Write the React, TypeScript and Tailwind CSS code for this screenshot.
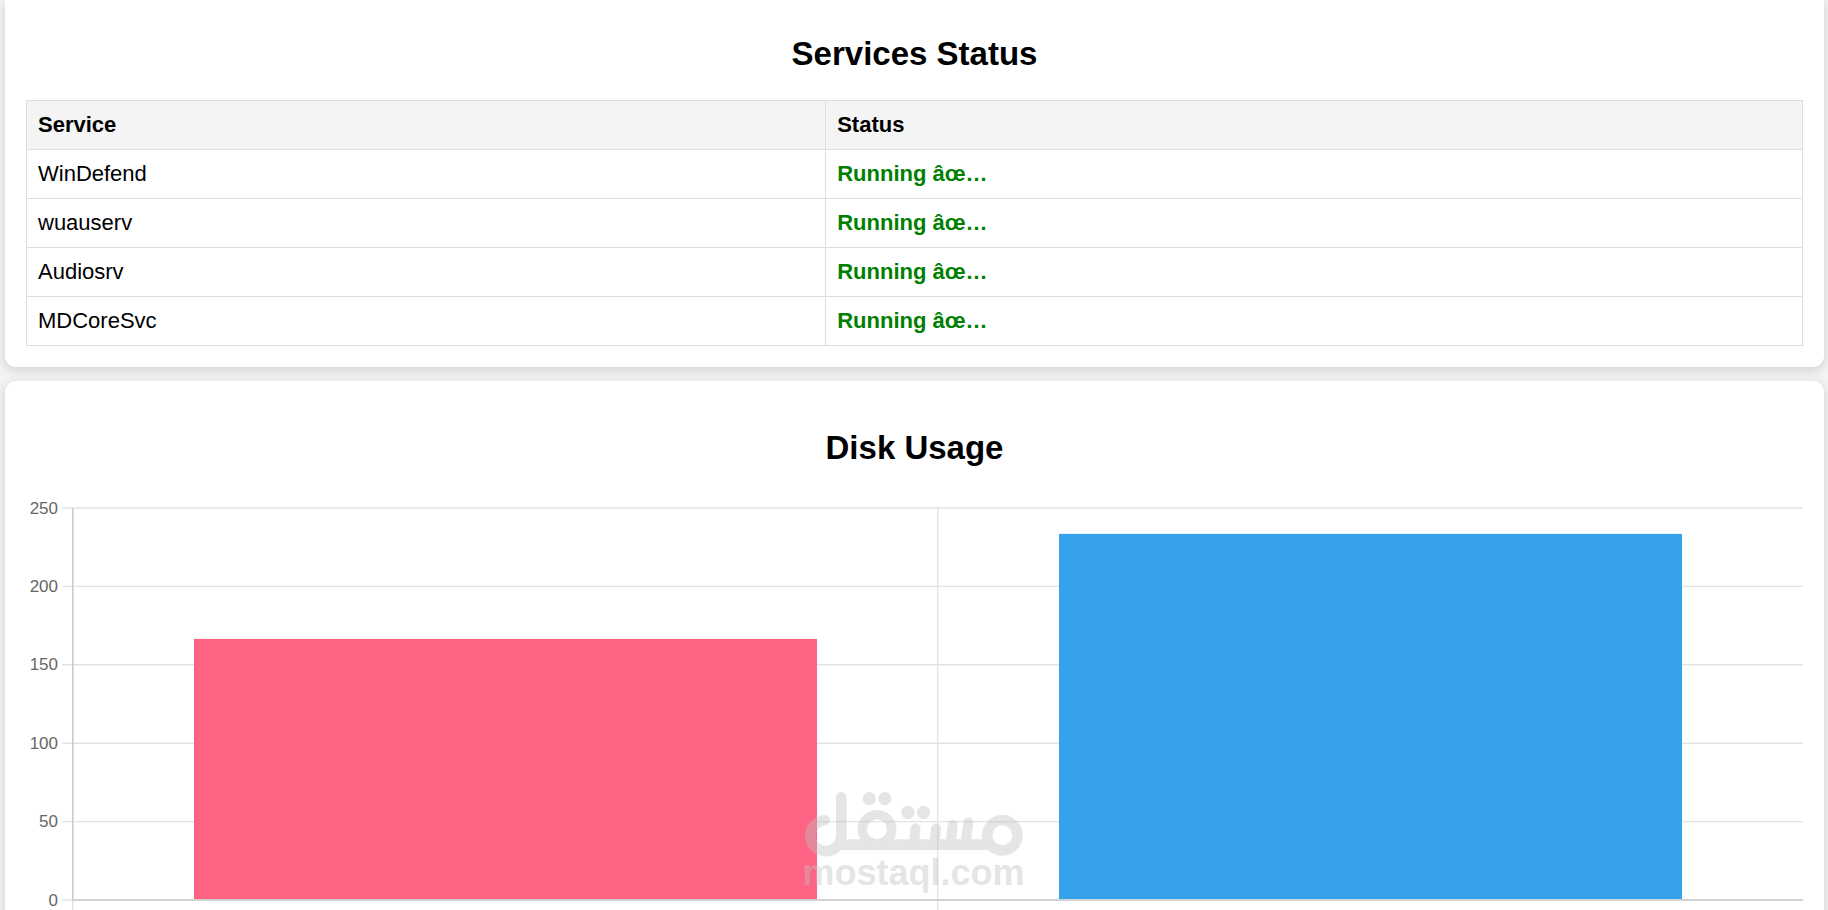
import React from 'react';

interface Service {
  name: string;
  running: boolean;
}

interface Disk {
  used: number;
  x: number;
  color: string;
}

const services: Service[] = [
  { name: 'WinDefend', running: true },
  { name: 'wuauserv', running: true },
  { name: 'Audiosrv', running: true },
  { name: 'MDCoreSvc', running: true }
];

const disks: Disk[] = [
  { used: 166.5, x: 168, color: '#FF6384' },
  { used: 233.5, x: 1033, color: '#36A2EB' }
];

const ticks = [0, 50, 100, 150, 200, 250];

const BASE_Y = 406;
const TOP_Y = 14;
const BAR_WIDTH = 623;

const toY = (value: number) => BASE_Y - ((BASE_Y - TOP_Y) * value) / 250;

const ServicesTable: React.FC = () => (
  <table className="w-full border-collapse text-left text-[22px] leading-[26px]">
    <thead>
      <tr className="bg-[#f4f4f4]">
        <th className="w-[45%] border border-[#dddddd] p-[11px] font-bold">Service</th>
        <th className="border border-[#dddddd] p-[11px] font-bold">Status</th>
      </tr>
    </thead>
    <tbody>
      {services.map((service) => (
        <tr key={service.name}>
          <td className="border border-[#dddddd] p-[11px]">{service.name}</td>
          <td className="border border-[#dddddd] p-[11px] font-bold text-[#008000]">
            {service.running ? 'Running âœ…' : 'Stopped'}
          </td>
        </tr>
      ))}
    </tbody>
  </table>
);

const DiskChart: React.FC = () => (
  <svg viewBox="0 0 1777 444" className="block w-full" role="img" aria-label="Disk Usage">
    {ticks.map((tick) => (
      <g key={tick}>
        <line x1="36" x2="1777" y1={toY(tick)} y2={toY(tick)} stroke="#e3e3e3" strokeWidth="1.4" />
        <text
          x="32"
          y={toY(tick) + 5.5}
          textAnchor="end"
          fill="#666666"
          className="text-[17px]"
        >
          {tick}
        </text>
      </g>
    ))}
    {[46.7, 911.7].map((x) => (
      <line key={x} x1={x} x2={x} y1={TOP_Y} y2="416" stroke="#e3e3e3" strokeWidth="1.4" />
    ))}
    <path d={`M46.7 ${TOP_Y}V${BASE_Y}H1777`} fill="none" stroke="#cacaca" strokeWidth="1.4" />
    {disks.map((disk) => (
      <rect
        key={disk.color}
        x={disk.x}
        y={toY(disk.used)}
        width={BAR_WIDTH}
        height={BASE_Y - toY(disk.used) - 1}
        fill={disk.color}
      />
    ))}
  </svg>
);

const Watermark: React.FC = () => (
  <svg
    viewBox="0 0 220 108"
    className="pointer-events-none absolute bottom-[11px] left-1/2 w-[220px] -translate-x-1/2 overflow-visible"
  >
    <g opacity="0.4" fill="none" stroke="#bcbfc1" strokeWidth="10" strokeLinecap="round">
      {/* lam */}
      <path d="M20.5 29.3A15.5 15.5 0 1 0 37.3 44.7V6.3" strokeWidth="10.6" />
      {/* baseline */}
      <path d="M34 53.7H186" strokeWidth="10.7" strokeLinecap="butt" />
      {/* qaf */}
      <circle cx="73" cy="38.3" r="14.7" strokeWidth="9.4" />
      {/* teeth of ta and sin */}
      <path d="M111.5 37.5L110 53M132 37.5L130.5 53M148.7 34L146.5 53M164.3 31.5L161.5 53" />
      {/* mim */}
      <circle cx="198.3" cy="44.3" r="15.2" strokeWidth="10.4" />
      <g fill="#bcbfc1" stroke="none">
        <circle cx="65.3" cy="7.7" r="6.6" />
        <circle cx="80.8" cy="7.7" r="6.6" />
        <circle cx="103.8" cy="21.3" r="6.6" />
        <circle cx="119.5" cy="21.3" r="6.6" />
        <text x="109.5" y="94" textAnchor="middle" className="text-[36px] font-bold">
          mostaql.com
        </text>
      </g>
    </g>
  </svg>
);

export default function App() {
  return (
    <main className="relative h-screen overflow-hidden bg-[#f1f3f5] pl-[5px] pr-1 font-['Liberation_Sans',Arial,sans-serif] text-black">
      <section className="mb-[14px] rounded-b-[11px] bg-white px-[21px] pb-[21px] pt-[35px] shadow-[0_3px_11px_rgba(0,0,0,0.15)]">
        <h2 className="mb-[27px] text-center text-[33px] font-bold leading-[38px]">Services Status</h2>
        <ServicesTable />
      </section>
      <section className="rounded-t-[11px] bg-white px-[21px] pb-[21px] pt-12 shadow-[0_3px_11px_rgba(0,0,0,0.15)]">
        <h2 className="mb-[27px] text-center text-[33px] font-bold leading-[38px]">Disk Usage</h2>
        <DiskChart />
      </section>
      <Watermark />
    </main>
  );
}
